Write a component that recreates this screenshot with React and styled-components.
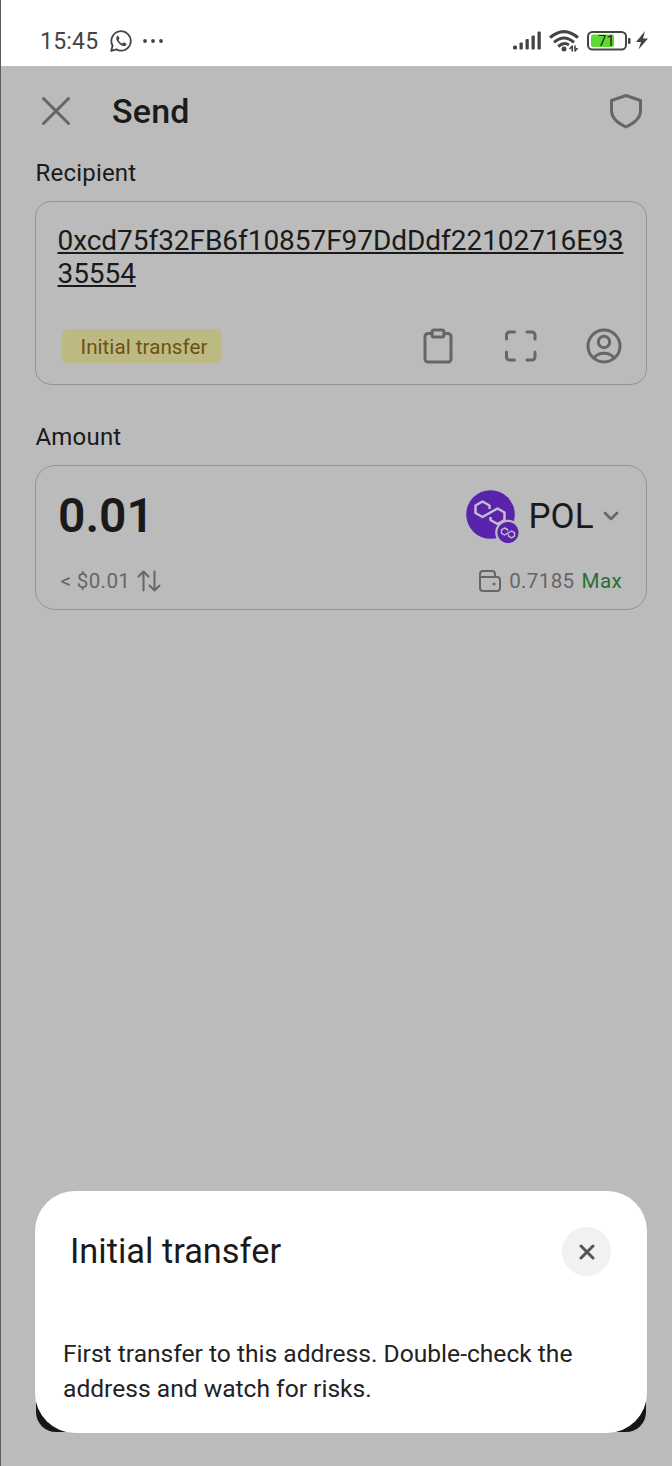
import React from "react"
import styled, { createGlobalStyle } from "styled-components"

const GlobalStyle = createGlobalStyle`
  * {
    box-sizing: border-box;
  }

  body {
    margin: 0;
    background: #bbb;
    font-family: Roboto, "Noto Sans", sans-serif;
    color: #1a1a1a;
  }

  svg {
    display: block;
    flex: none;
  }

  button {
    border: 0;
    padding: 0;
    background: none;
    font: inherit;
    color: inherit;
  }
`

const Screen = styled.div`
  position: relative;
  width: 672px;
  height: 1466px;
  overflow: hidden;
  background: #bbb;
  border-left: 1px solid #5c5c5c;
`

const StatusBar = styled.div`
  display: flex;
  align-items: center;
  justify-content: space-between;
  height: 66px;
  padding: 15px 24px 0 39px;
  background: #fff;
  color: #444;
`

const StatusGroup = styled.div`
  display: flex;
  align-items: center;
  gap: ${(props) => props.$gap}px;
`

const Clock = styled.span`
  padding: 2px 1px 0 0;
  font-size: 23px;
  line-height: 28px;
  letter-spacing: 0.2px;
`

const Header = styled.header`
  display: flex;
  align-items: center;
  height: 90px;
  padding: 0 29px 0 39px;
  color: #666;
`

const PageTitle = styled.h1`
  flex: 1;
  margin: 0 0 0 41px;
  font-size: 34px;
  line-height: 40px;
  font-weight: 500;
  letter-spacing: 0.2px;
  color: #1a1a1a;
`

const Form = styled.main`
  padding: 0 25px 0 34px;
`

const Label = styled.div`
  height: 28px;
  margin-top: ${(props) => props.$top || 0}px;
  margin-bottom: 14px;
  padding-left: 0.5px;
  font-size: 24px;
  line-height: 28px;
  letter-spacing: 0.2px;
`

const Card = styled.section`
  display: flex;
  flex-direction: column;
  justify-content: space-between;
  height: ${(props) => props.$height}px;
  padding: ${(props) => props.$padding};
  border: 1px solid #939393;
  border-radius: ${(props) => props.$radius}px;
`

const Row = styled.div`
  display: flex;
  align-items: center;
  justify-content: space-between;
`

const Address = styled.div`
  font-size: 28px;
  line-height: 33px;
  letter-spacing: -0.05px;
  word-break: break-all;
  text-decoration: underline;
  text-decoration-thickness: 1.5px;
  text-underline-offset: 2px;
`

const Tag = styled.span`
  width: 160px;
  height: 34px;
  margin-left: 4px;
  border-radius: 6px;
  background: #bdb983;
  color: #6d5212;
  font-size: 20.7px;
  line-height: 36px;
  text-align: center;
  padding-left: 5px;
`

const Actions = styled.div`
  display: flex;
  align-items: center;
  gap: 46.75px;
  margin-right: 4px;
  color: #666;
`

const Amount = styled.div`
  font-size: 48px;
  line-height: 56px;
  font-weight: 600;
  margin-top: -1px;
`

const Token = styled.button`
  display: flex;
  align-items: center;
  margin-right: 1px;
  color: #666;
`

const TokenName = styled.span`
  margin: 0 7.5px 0 9.5px;
  font-size: 35px;
  line-height: 40px;
  color: #1a1a1a;
`

const Meta = styled.div`
  display: flex;
  align-items: center;
  gap: 7px;
  padding-left: ${(props) => props.$indent || 0}px;
  font-size: 20.6px;
  line-height: 24px;
  letter-spacing: 0.35px;
  color: #666;
`

const Max = styled.span`
  color: #257132;
`

/* only the lower corners show behind the sheet */
const SubmitButton = styled.div`
  position: absolute;
  left: 35px;
  right: 26px;
  bottom: 34px;
  height: 80px;
  border-radius: 20px;
  background: #161616;
`

const Sheet = styled.div`
  position: absolute;
  left: 34px;
  right: 25px;
  bottom: 33px;
  height: 242px;
  padding: 36px 36px 0 28px;
  border-radius: 40px;
  background: #fff;
`

const SheetTitle = styled.h2`
  margin: -2px 0 0 7px;
  font-size: 34.4px;
  line-height: 40px;
  font-weight: 400;
`

const CloseButton = styled.button`
  display: grid;
  place-items: center;
  width: 49px;
  height: 49px;
  border-radius: 50%;
  background: #f1f1f1;
  color: #555;
`

const SheetText = styled.p`
  margin: 60px 0 0;
  font-size: 24.6px;
  line-height: 35px;
  color: #222;
`

const Stroke = ({ w, h = w, width = 3, children }) => (
  <svg
    width={w}
    height={h}
    viewBox={`0 0 ${w} ${h}`}
    fill="none"
    stroke="currentColor"
    strokeWidth={width}
    strokeLinecap="round"
    strokeLinejoin="round"
  >
    {children}
  </svg>
)

const WhatsApp = () => (
  <Stroke w={22} width={1.8}>
    <path d="M1.2 20.8 2.6 15.7A9.7 9.7 0 1 1 6.3 19.4Z" />
    <path
      d="M7.6 5.8c-1.8 1-1.7 3.3-.5 5.2 1.6 2.7 3.7 4.5 6.3 5.1 1.5.3 3.1-.7 3.1-2.4l-2.7-1.5-1.4 1.4c-1.8-.8-3.1-2.1-3.9-3.7l1-1.3-1.1-2.7Z"
      fill="currentColor"
      stroke="none"
    />
  </Stroke>
)

const Dots = () => (
  <svg width="20" height="4" fill="currentColor">
    <circle cx="2" cy="2" r="1.9" />
    <circle cx="10" cy="2" r="1.9" />
    <circle cx="18" cy="2" r="1.9" />
  </svg>
)

const Signal = () => (
  <svg width="28" height="19" fill="currentColor">
    <rect x="0" y="14.5" width="4" height="4" rx="1.5" />
    <rect x="6.5" y="11.5" width="3.3" height="7" rx="1" />
    <rect x="12.5" y="8" width="3.3" height="10.5" rx="1" />
    <rect x="18.5" y="4.5" width="3.3" height="14" rx="1" />
    <rect x="24.5" y="0.5" width="3.3" height="18" rx="1" />
  </svg>
)

const Wifi = () => (
  <Stroke w={30} h={22} width={3}>
    <g strokeLinecap="butt">
      <path d="M1 7.7Q15-4.5 29 7.7" />
      <path d="M5 12.3Q15 3.7 25 12.3" />
      <path d="M9.2 16.5Q15 11.5 20 15" />
    </g>
    <circle cx="15" cy="19" r="2.5" fill="currentColor" stroke="none" />
    <path d="M23.2 21v-5l-2.2 2.5M26 16v5l2.2-2.5" strokeWidth="1.6" />
  </Stroke>
)

const BatterySvg = styled.svg`
  margin-right: -3px;
`

const Battery = () => (
  <BatterySvg width="44" height="20">
    <rect x="1" y="1" width="38" height="17.5" rx="4.5" fill="none" stroke="#444" strokeWidth="2" />
    <rect x="4" y="3.5" width="23" height="12.5" rx="2" fill="#5fd935" />
    <rect x="41" y="7" width="2.5" height="6" rx="1" fill="#444" />
    <text x="19.5" y="15" textAnchor="middle" fontSize="14.5" fill="#222">
      71
    </text>
  </BatterySvg>
)

const Bolt = () => (
  <svg width="12" height="19" fill="currentColor">
    <path d="M9 0 0 11h5L2.5 18.5 12 7.5H7Z" />
  </svg>
)

const PolygonMark = () => (
  <svg width="53" height="53" viewBox="0 0 53 53">
    <circle cx="24.5" cy="24.5" r="24.3" fill="#5923ab" />
    <g fill="none" stroke="#c5bdce" strokeWidth="2.5" strokeLinejoin="round">
      <path d="M23.5 19v-3.500L16.500 11.500l-7 4v7.500l7 4 15-8.500 7 4v7.500l-7 4-7-4v-3" />
    </g>
    <circle cx="42" cy="42.5" r="12.8" fill="#bbb" />
    <circle cx="42" cy="42.5" r="10.6" fill="#5923ab" />
    <g fill="none" stroke="#c5bdce" strokeWidth="1.4" strokeLinejoin="round">
      <path d="M41.5 41v-1.500L38.500 38l-3 1.800v3.500l3 1.700 7-4 3 1.700v3.500l-3 1.700-3-1.700v-2" />
    </g>
  </svg>
)

const App = () => {
  return (
    <>
      <GlobalStyle />
      <Screen>
        <StatusBar>
          <StatusGroup $gap={11}>
            <Clock>15:45</Clock>
            <WhatsApp />
            <Dots />
          </StatusGroup>
          <StatusGroup $gap={8}>
            <Signal />
            <Wifi />
            <Battery />
            <Bolt />
          </StatusGroup>
        </StatusBar>

        <Header>
          <Stroke w={31}>
            <path d="M3.5 2.5 28.500 27.500M28.500 2.500 3.500 27.500" />
          </Stroke>
          <PageTitle>Send</PageTitle>
          <Stroke w={34} h={36}>
            <path d="M17 2.5 31.5 7.5V18c0 8-7 12.5-14.5 16C9.5 30.5 2.5 26 2.5 18V7.5Z" />
          </Stroke>
        </Header>

        <Form>
          <Label $top={3}>Recipient</Label>
          <Card $height={184} $radius={16} $padding="22px 20px 20px 21.5px">
            <Address>0xcd75f32FB6f10857F97DdDdf22102716E9335554</Address>
            <Row>
              <Tag>Initial transfer</Tag>
              <Actions>
                <Stroke w={30} h={36}>
                  <path d="M9 5.5H5a3 3 0 0 0-3 3V31a3 3 0 0 0 3 3h20a3 3 0 0 0 3-3V8.5a3 3 0 0 0-3-3h-4" />
                  <rect x="9" y="2" width="12" height="7" rx="2" />
                </Stroke>
                <Stroke w={40} h={36}>
                  <path d="M7.5 11V7a3 3 0 0 1 3-3h5M28 4h5a3 3 0 0 1 3 3v4M36 24v5a3 3 0 0 1-3 3h-5M15.5 32h-5a3 3 0 0 1-3-3v-5" />
                </Stroke>
                <Stroke w={36}>
                  <circle cx="18" cy="18" r="16" />
                  <circle cx="18" cy="14" r="5.7" />
                  <path d="M8 30C12 23.5 24 23.5 28 30" />
                </Stroke>
              </Actions>
            </Row>
          </Card>

          <Label $top={38}>Amount</Label>
          <Card $height={145} $radius={20} $padding="23px 24px 16px 22px">
            <Row>
              <Amount>0.01</Amount>
              <Token>
                <PolygonMark />
                <TokenName>POL</TokenName>
                <Stroke w={20} h={12} width={2.6}>
                  <path d="M4 2 10 8 16 2" />
                </Stroke>
              </Token>
            </Row>
            <Row>
              <Meta $indent={2.5}>
                <span>&lt; $0.01</span>
                <Stroke w={24} h={22} width={2}>
                  <path d="M6.5 20.5V1.5M1.5 6.5l5-5 5 5M17.5 1.5v19M12.5 15.5l5 5 5-5" />
                </Stroke>
              </Meta>
              <Meta>
                <Stroke w={24} h={22} width={2}>
                  <path d="M2 6.5V18a3 3 0 0 0 3 3h14a3 3 0 0 0 3-3V10a3 3 0 0 0-3-3H2.5M2 7V4a3 3 0 0 1 3-3h9a3 3 0 0 1 3 3v3" />
                  <circle cx="16" cy="14" r="0.6" />
                </Stroke>
                <span>0.7185</span>
                <Max>Max</Max>
              </Meta>
            </Row>
          </Card>
        </Form>

        <SubmitButton />
        <Sheet>
          <Row>
            <SheetTitle>Initial transfer</SheetTitle>
            <CloseButton>
              <Stroke w={16}>
                <path d="M2 2 14 14M14 2 2 14" />
              </Stroke>
            </CloseButton>
          </Row>
          <SheetText>
            First transfer to this address. Double-check the address and watch
            for risks.
          </SheetText>
        </Sheet>
      </Screen>
    </>
  )
}

export default App
